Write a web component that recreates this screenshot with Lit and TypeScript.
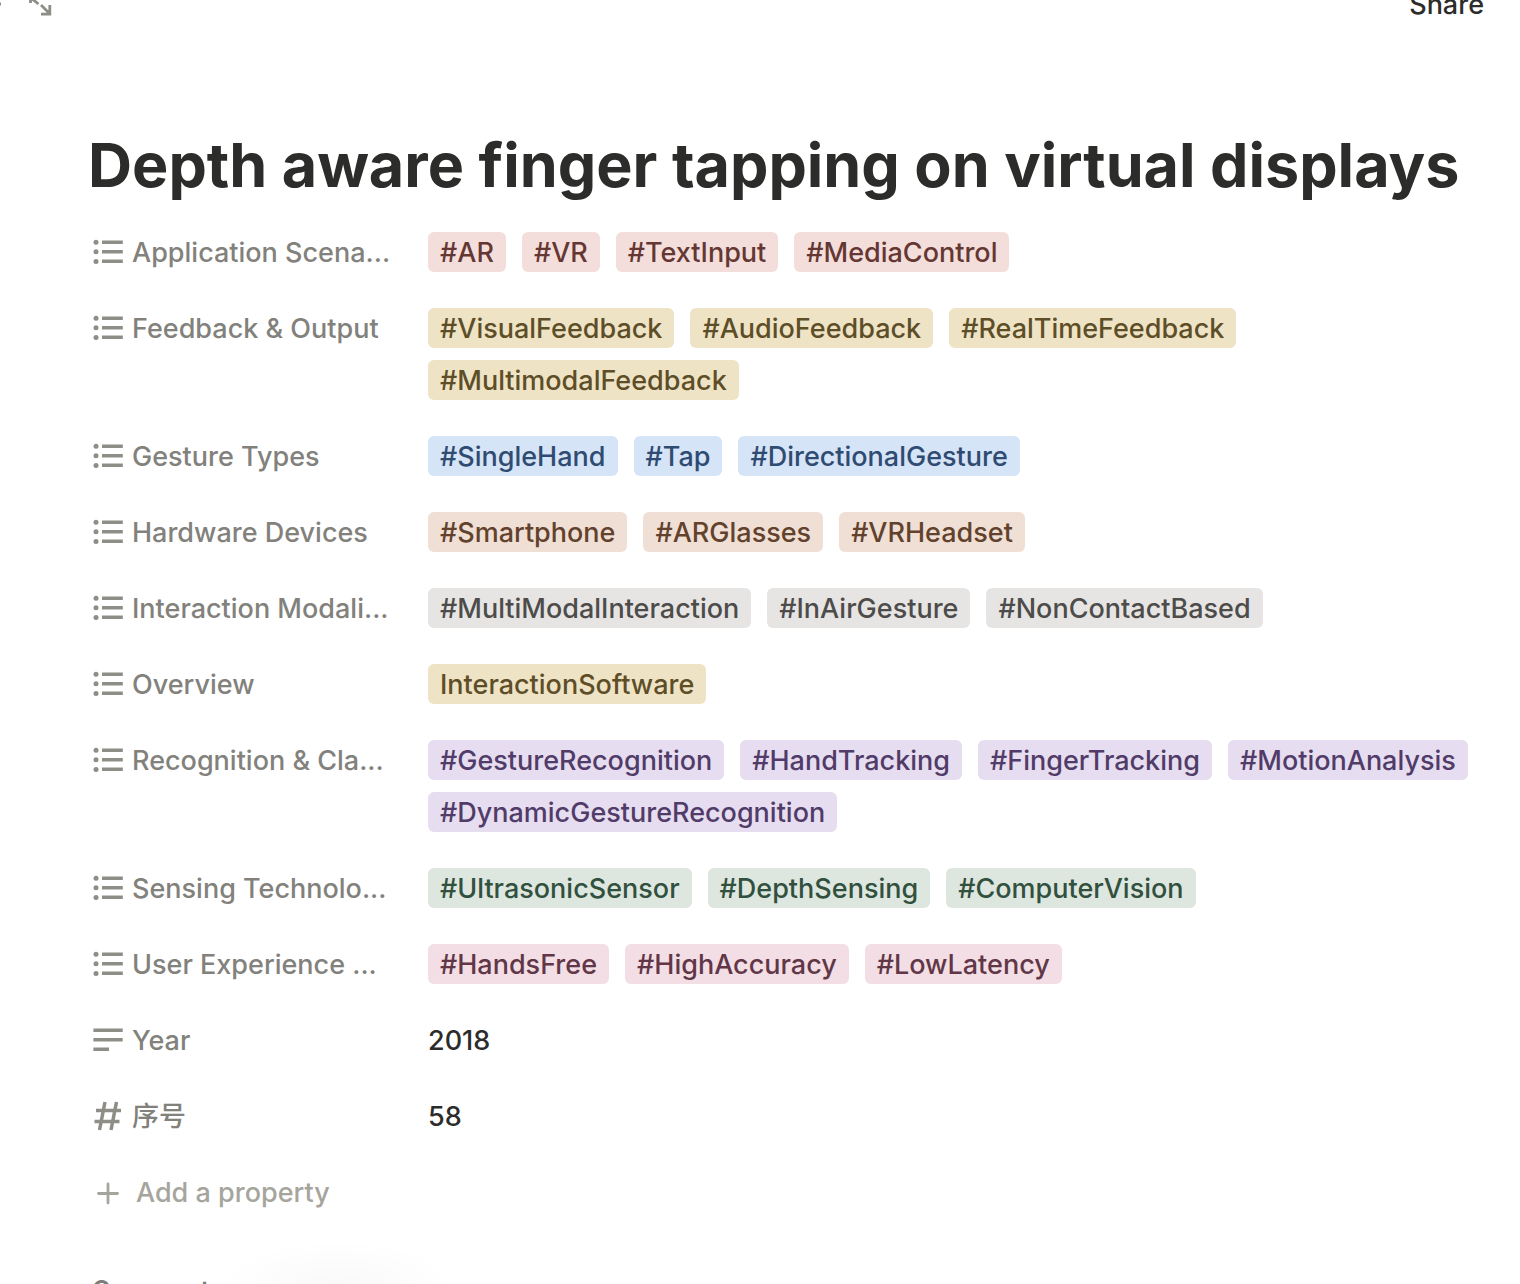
import { LitElement, html, css, svg } from "lit";
import { customElement, property } from "lit/decorators.js";

type Kind = "list" | "text" | "number";
type Tone = "red" | "yellow" | "blue" | "orange" | "gray" | "purple" | "green" | "pink";

interface Prop {
  kind: Kind;
  name: string;
  tone?: Tone;
  tags?: string[];
  value?: string;
}

const PROPS: Prop[] = [
  { kind: "list", name: "Application Scena...", tone: "red", tags: ["#AR", "#VR", "#TextInput", "#MediaControl"] },
  {
    kind: "list",
    name: "Feedback & Output",
    tone: "yellow",
    tags: ["#VisualFeedback", "#AudioFeedback", "#RealTimeFeedback", "#MultimodalFeedback"],
  },
  { kind: "list", name: "Gesture Types", tone: "blue", tags: ["#SingleHand", "#Tap", "#DirectionalGesture"] },
  { kind: "list", name: "Hardware Devices", tone: "orange", tags: ["#Smartphone", "#ARGlasses", "#VRHeadset"] },
  {
    kind: "list",
    name: "Interaction Modali...",
    tone: "gray",
    tags: ["#MultiModalInteraction", "#InAirGesture", "#NonContactBased"],
  },
  { kind: "list", name: "Overview", tone: "yellow", tags: ["InteractionSoftware"] },
  {
    kind: "list",
    name: "Recognition & Cla...",
    tone: "purple",
    tags: ["#GestureRecognition", "#HandTracking", "#FingerTracking", "#MotionAnalysis", "#DynamicGestureRecognition"],
  },
  {
    kind: "list",
    name: "Sensing Technolo...",
    tone: "green",
    tags: ["#UltrasonicSensor", "#DepthSensing", "#ComputerVision"],
  },
  { kind: "list", name: "User Experience ...", tone: "pink", tags: ["#HandsFree", "#HighAccuracy", "#LowLatency"] },
  { kind: "text", name: "Year", value: "2018" },
  { kind: "number", name: "序号", value: "58" },
];

const GLYPHS = {
  list: svg`
    <circle cx="4" cy="6.300" r="2.500" /><circle cx="4" cy="15.800" r="2.500" /><circle cx="4" cy="25.400" r="2.500" />
    <path d="M10 4.600h20.800v3.500H10zM10 14.100h20.800v3.500H10zM10 23.600h20.800v3.500H10z" />`,
  text: svg`<path d="M1.400 4.600h29.300v3.500H1.400zM1.400 14.100h29.300v3.500H1.400zM1.400 23.600h15.600v3.500H1.400z" />`,
  number: svg`
    <path d="M13 2L7.500 30M24.500 2L19 30M4 10.500h25M2.500 21.500h25" fill="none" stroke="currentColor" stroke-width="3.500" />`,
};

/* Every one-line text sits in a 40px box: a 38px line under 2px of padding. */
const label = css`
  .label {
    padding-top: 2px;
    line-height: 38px;
    white-space: nowrap;
  }
`;

@customElement("property-row")
class PropertyRow extends LitElement {
  @property({ attribute: false }) prop!: Prop;

  static styles = [
    label,
    css`
      :host {
        display: grid;
        grid-template-columns: 300px minmax(0, 1fr);
        gap: 36px;
        align-items: start;
      }
      .name {
        display: flex;
        align-items: center;
        gap: 8px;
        height: 40px;
        padding: 0;
        border: 0;
        background: none;
        font: inherit;
        color: #82817c;
        cursor: pointer;
      }
      .icon {
        width: 32px;
        height: 32px;
        flex: none;
        fill: currentColor;
        color: #8e8d86;
      }
      .value {
        display: flex;
        flex-wrap: wrap;
        gap: 12px 16px;
        color: #2c2c2b;
      }
      .tag {
        padding-left: 12px;
        padding-right: 12px;
        border-radius: 6px;
      }
      .red { background: #f4dedc; color: #643732; }
      .yellow { background: #efe3c5; color: #5d4e28; }
      .blue { background: #d5e4f7; color: #304b71; }
      .orange { background: #f0dfd4; color: #62422d; }
      .gray { background: #e6e5e3; color: #4d4c4a; }
      .purple { background: #e6def0; color: #513b68; }
      .green { background: #dde7df; color: #32503e; }
      .pink { background: #f2dee4; color: #613647; }
    `,
  ];

  render() {
    const p = this.prop;
    return html`
      <button class="name" type="button">
        <svg class="icon" viewBox="0 0 32 32" aria-hidden="true">${GLYPHS[p.kind]}</svg>
        <span class="label">${p.name}</span>
      </button>
      <div class="value">
        ${p.tags
          ? p.tags.map((t) => html`<span class="label tag ${p.tone}">${t}</span>`)
          : html`<span class="label">${p.value}</span>`}
      </div>
    `;
  }
}

@customElement("app-root")
class AppRoot extends LitElement {
  static styles = [
    css`
      :host {
        display: block;
        position: relative;
        box-sizing: border-box;
        height: 100vh;
        overflow: hidden;
        background: #fff;
        color: #2c2c2b;
        font: 500 27px/40px Inter, "Noto Sans CJK SC", sans-serif;
      }
      button {
        padding: 0;
        border: 0;
        background: none;
        font: inherit;
        color: inherit;
        cursor: pointer;
      }
      .topbar {
        display: flex;
        align-items: flex-end;
        justify-content: space-between;
        height: 24px;
        padding-right: 36px;
      }
      .nav {
        color: #8e8d86;
      }
      .nav svg {
        display: block;
        width: 64px;
        height: 40px;
      }
      .page {
        padding: 103px 48px 0 88px;
      }
      h1 {
        margin: 0;
        font-size: 61px;
        line-height: 76px;
        font-weight: 700;
      }
      .props {
        display: grid;
        gap: 36px;
        padding: 29px 0 0 4px;
      }
      .add {
        display: flex;
        align-items: center;
        gap: 12px;
        justify-self: start;
        height: 40px;
        color: #a6a59d;
      }
      .add svg {
        width: 32px;
        height: 32px;
      }
      h2 {
        margin: 0;
        padding: 58px 0 0 4px;
        font-size: 25px;
        line-height: 40px;
        font-weight: 600;
        color: #7f7e79;
      }
      .glow {
        position: absolute;
        left: 220px;
        bottom: -44px;
        width: 236px;
        height: 88px;
        background: radial-gradient(closest-side, rgba(0, 0, 0, 0.025), transparent);
        pointer-events: none;
      }
    `,
    label,
  ];

  render() {
    return html`
      <header class="topbar">
        <button class="nav" type="button" aria-label="Open as full page">
          <svg viewBox="0 0 64 40" fill="none" stroke="currentColor" stroke-width="2.800" aria-hidden="true">
            <path d="M0 20h1M30.500 19v-6M30 14h8M31 14L38.500 20M41 21L49.500 29.500M49.800 21v9.200H41" />
          </svg>
        </button>
        <button type="button"><div class="label">Share</div></button>
      </header>
      <main class="page">
        <h1>Depth aware finger tapping on virtual displays</h1>
        <section class="props">
          ${PROPS.map((p) => html`<property-row .prop=${p}></property-row>`)}
          <button class="add" type="button">
            <svg viewBox="0 0 32 32" fill="none" stroke="currentColor" stroke-width="2.800" stroke-linecap="round" aria-hidden="true">
              <path d="M6.500 17.500h19M16 8v19" />
            </svg>
            <span class="label">Add a property</span>
          </button>
        </section>
        <h2>Comments</h2>
      </main>
      <div class="glow"></div>
    `;
  }
}
